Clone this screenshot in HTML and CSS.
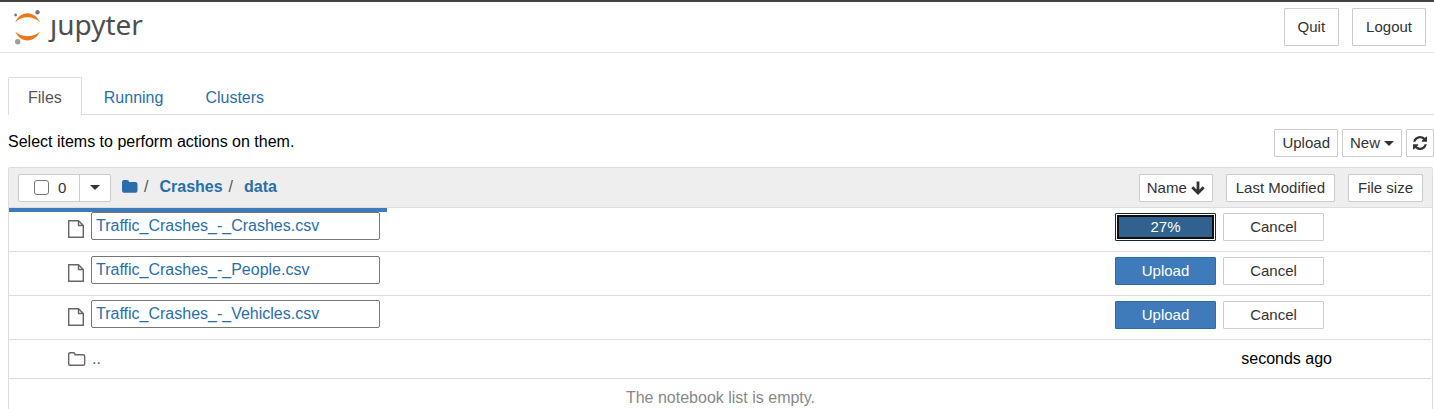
FILE: index.html
```html
<!DOCTYPE html>
<html lang="en">
<head>
<meta charset="utf-8">
<title>Home Page - Select or create a notebook</title>
<link rel="stylesheet" href="styles.css">
</head>
<body>
<header class="header">
  <a class="brand" href="#">
    <svg class="brand-mark" viewBox="0 0 28 36" aria-hidden="true">
      <path d="M1.300 13.300C3.500 7.800 8 4.300 13.500 4.300S23.500 7.800 26 13.300C23 10.300 18.500 8.300 13.500 8.300S4 10.300 1.300 13.300Z" fill="#ee7718"/>
      <path d="M1.300 22.500C3.500 28 8 31.500 13.500 31.500S23.500 28 26 22.500C23 25.300 18.500 27.200 13.500 27.200S4 25.300 1.300 22.500Z" fill="#ee7718"/>
      <circle cx="23.500" cy="3.300" r="2.200" fill="#767677"/>
      <circle cx="1.600" cy="6" r="1.400" fill="#767677"/>
      <circle cx="3.700" cy="32.700" r="2.700" fill="#9e9e9e"/>
    </svg>
    <span class="brand-name">ȷupyter</span>
  </a>
  <div class="header-actions">
    <button class="btn btn-large" type="button">Quit</button>
    <button class="btn btn-large" type="button">Logout</button>
  </div>
</header>
<main>
  <nav class="tabs">
    <a class="tab tab-active" href="#">Files</a>
    <a class="tab" href="#">Running</a>
    <a class="tab" href="#">Clusters</a>
  </nav>
  <div class="toolbar">
    <p class="hint">Select items to perform actions on them.</p>
    <div class="toolbar-actions">
      <button class="btn" type="button">Upload</button>
      <button class="btn" type="button">New <span class="caret"></span></button>
      <button class="btn btn-icon" type="button" aria-label="Refresh">
        <svg class="icon-refresh" viewBox="0 0 1536 1536" aria-hidden="true"><path fill="currentColor" d="M1511 928q0 5-1 7-64 268-268 434.500T764 1536q-146 0-282.500-55T238 1324l-129 129q-19 19-45 19t-45-19-19-45V960q0-26 19-45t45-19h448q26 0 45 19t19 45-19 45l-137 137q71 66 161 102t187 36q134 0 250-65t186-179q11-17 53-117 8-23 30-23h192q13 0 22.500 9.500t9.500 22.500zm25-800v448q0 26-19 45t-45 19h-448q-26 0-45-19t-19-45 19-45l138-138Q969 256 768 256q-134 0-250 65T332 500q-11 17-53 117-8 23-30 23H50q-13 0-22.500-9.500T18 608v-7q65-268 270-434.500T768 0q146 0 284 55.500T1297 212l130-129q19-19 45-19t45 19 19 45z"/></svg>
      </button>
    </div>
  </div>
  <section class="list">
    <div class="list-header">
      <div class="select-group">
        <label class="select-all"><input class="check" type="checkbox" aria-label="Select all"><span>0</span></label>
        <button class="select-menu" type="button" aria-label="Select by type"><span class="caret"></span></button>
      </div>
      <nav class="crumbs">
        <a href="#" aria-label="Root folder"><svg class="icon-root" viewBox="0 0 16 13" aria-hidden="true"><path fill="currentColor" d="M0 2Q0 0 2 0H5Q7 0 7 2H13.500Q15.500 2 15.500 4V10.800Q15.500 12.800 13.500 12.800H2Q0 12.800 0 10.800Z"/></svg></a>
        <span class="slash">/</span>
        <a class="crumb" href="#">Crashes</a>
        <span class="slash">/</span>
        <a class="crumb" href="#">data</a>
      </nav>
      <div class="sorts">
        <button class="btn" type="button">Name <svg class="icon-arrow" viewBox="0 0 14 14" aria-hidden="true"><path fill="none" stroke="currentColor" stroke-width="2.800" d="M7 .500V12M1.300 6.300L7 12L12.700 6.300"/></svg></button>
        <button class="btn btn-sort" type="button">Last Modified</button>
        <button class="btn btn-sort" type="button">File size</button>
      </div>
    </div>
    <div class="row">
      <div class="progress" role="progressbar" aria-valuenow="27" aria-label="Upload progress" style="width:26.600%"></div>
      <svg class="icon-file" viewBox="0 0 16 18" aria-hidden="true"><path d="M.700 .700H10.500L15.300 5.500V17.300H.700ZM10.500 .700V5.500H15.300"/></svg>
      <input class="filename" type="text" value="Traffic_Crashes_-_Crashes.csv" aria-label="File name">
      <div class="row-actions">
        <button class="btn btn-primary btn-busy" type="button">27%</button>
        <button class="btn btn-wide" type="button">Cancel</button>
      </div>
    </div>
    <div class="row">
      <svg class="icon-file" viewBox="0 0 16 18" aria-hidden="true"><path d="M.700 .700H10.500L15.300 5.500V17.300H.700ZM10.500 .700V5.500H15.300"/></svg>
      <input class="filename" type="text" value="Traffic_Crashes_-_People.csv" aria-label="File name">
      <div class="row-actions">
        <button class="btn btn-primary" type="button">Upload</button>
        <button class="btn btn-wide" type="button">Cancel</button>
      </div>
    </div>
    <div class="row">
      <svg class="icon-file" viewBox="0 0 16 18" aria-hidden="true"><path d="M.700 .700H10.500L15.300 5.500V17.300H.700ZM10.500 .700V5.500H15.300"/></svg>
      <input class="filename" type="text" value="Traffic_Crashes_-_Vehicles.csv" aria-label="File name">
      <div class="row-actions">
        <button class="btn btn-primary" type="button">Upload</button>
        <button class="btn btn-wide" type="button">Cancel</button>
      </div>
    </div>
    <div class="row row-parent">
      <svg class="icon-folder" viewBox="0 0 18 14" aria-hidden="true"><path d="M.700 2.200Q.700 .700 2.200 .700H5.500Q7 .700 7 2.200V2.700H15Q16.700 2.700 16.700 4.400V11.700Q16.700 13.300 15 13.300H2.300Q.700 13.300 .700 11.700Z"/></svg>
      <a class="parent" href="#">..</a>
      <span class="modified">seconds ago</span>
    </div>
    <p class="empty">The notebook list is empty.</p>
  </section>
</main>
</body>
</html>
```
FILE: styles.css
```css
* {
  box-sizing: border-box;
}

body {
  margin: 0;
  border-top: 2px solid #404040;
  background: #fff;
  color: #000;
  font: 16px/20px "Liberation Sans", Arial, sans-serif;
}

a {
  color: #296eaa;
  text-decoration: none;
}

p {
  margin: 0;
}

svg {
  display: block;
  flex: none;
}

.header {
  display: flex;
  justify-content: space-between;
  align-items: flex-start;
  height: 51px;
  padding: 6px 8px 0 14px;
  border-bottom: 1px solid #e7e7e7;
}

.brand {
  display: flex;
  gap: 8px;
  padding-top: 1px;
}

.brand-mark {
  width: 28px;
  height: 36px;
}

.brand-name {
  color: #4e4e4e;
  font: 28px/30px "Noto Sans", "Open Sans", sans-serif;
}

.header-actions {
  display: flex;
  gap: 13px;
}

.btn {
  display: flex;
  align-items: center;
  justify-content: center;
  gap: 4px;
  height: 28px;
  padding: 0 7px;
  border: 1px solid #ccc;
  border-radius: 1px;
  background: #fff;
  color: #333;
  font: 15px/20px "Liberation Sans", Arial, sans-serif;
  white-space: nowrap;
}

.btn-large {
  height: 38px;
  padding: 0 13px;
}

.btn-icon {
  padding: 0 6px;
}

.btn-sort {
  padding: 0 9px;
}

.btn-wide,
.btn-primary {
  width: 101px;
}

.btn-primary {
  border-color: #2e6da4;
  background: #3f7bba;
  color: #fff;
}

.btn-busy {
  border-color: #122b40;
  background: #30618f;
  box-shadow: inset 0 0 0 1px #fff, inset 0 0 0 3px #101010;
}

.caret {
  border: 5px solid transparent;
  border-top-color: currentColor;
  border-bottom: 0;
}

.tabs {
  display: flex;
  gap: 2px;
  margin: 24px 0 0 8px;
  border-bottom: 1px solid #ddd;
}

.tab {
  height: 37px;
  padding: 10px 19px 0;
  border: 1px solid transparent;
  border-bottom: 0;
  border-radius: 2px 2px 0 0;
}

.tab-active {
  height: 38px;
  margin-bottom: -1px;
  border-color: #ddd;
  background: #fff;
  color: #555;
}

.toolbar {
  display: flex;
  justify-content: space-between;
  padding: 14px 0 10px 8px;
}

.hint {
  padding-top: 3px;
}

.toolbar-actions {
  display: flex;
  gap: 4px;
}

.icon-refresh {
  width: 14px;
  height: 14px;
}

.list {
  margin: 0 1px 0 8px;
  border: 1px solid #ddd;
  border-bottom: 0;
  border-radius: 2px 2px 0 0;
}

.list-header {
  display: flex;
  align-items: center;
  height: 40px;
  padding: 0 9px;
  border-bottom: 1px solid #ddd;
  background: #eee;
}

.select-group {
  display: flex;
  height: 28px;
  border: 1px solid #ccc;
  border-radius: 2px;
  background: #fff;
}

.select-all {
  display: flex;
  align-items: center;
  gap: 9px;
  width: 61px;
  padding-left: 15px;
  border-right: 1px solid #ccc;
  color: #333;
  font-size: 15px;
}

.check {
  appearance: none;
  width: 15px;
  height: 15px;
  margin: 0;
  border: 1px solid #767676;
  border-radius: 3px;
  background: #fff;
}

.select-menu {
  display: flex;
  align-items: center;
  justify-content: center;
  width: 30px;
  padding: 0;
  border: 0;
  background: none;
  color: #333;
}

.crumbs {
  display: flex;
  align-items: center;
  gap: 6px;
  padding: 0 0 2px 11px;
}

.icon-root {
  width: 16px;
  height: 13px;
}

.slash {
  color: #555;
}

.crumb {
  padding-left: 5px;
  font-weight: bold;
}

.sorts {
  display: flex;
  gap: 13px;
  margin-left: auto;
}

.icon-arrow {
  width: 14px;
  height: 14px;
}

.row {
  position: relative;
  display: flex;
  align-items: flex-start;
  padding: 4px 107px 11px 59px;
  margin-right: 1px;
  border-bottom: 1px solid #ddd;
}

.row:not(.row-parent) {
  padding-bottom: 11px;
  height: 44px;
}

.progress {
  position: absolute;
  top: 0;
  left: 0;
  height: 4px;
  background: #3f7bba;
}

.icon-file,
.icon-folder {
  fill: none;
  stroke: #666;
  stroke-width: 1.400px;
}

.icon-file {
  width: 16px;
  height: 18px;
  margin: 8px 7px 0 0;
}

.icon-folder {
  width: 18px;
  height: 14px;
}

.filename {
  width: 289px;
  height: 28px;
  padding: 0 4px 1px;
  border: 1px solid #767676;
  border-radius: 2px;
  background: #fff;
  color: #296eaa;
  font: 16px/20px "Liberation Sans", Arial, sans-serif;
}

.row-actions {
  display: flex;
  gap: 7px;
  padding-top: 1px;
  margin-left: auto;
}

.row-parent {
  padding: 9px 99px 9px 59px;
  align-items: center;
}

.parent {
  margin-left: 6px;
}

.modified {
  margin-left: auto;
}

.empty {
  padding: 9px 0 1px;
  color: #888;
  text-align: center;
}
```
